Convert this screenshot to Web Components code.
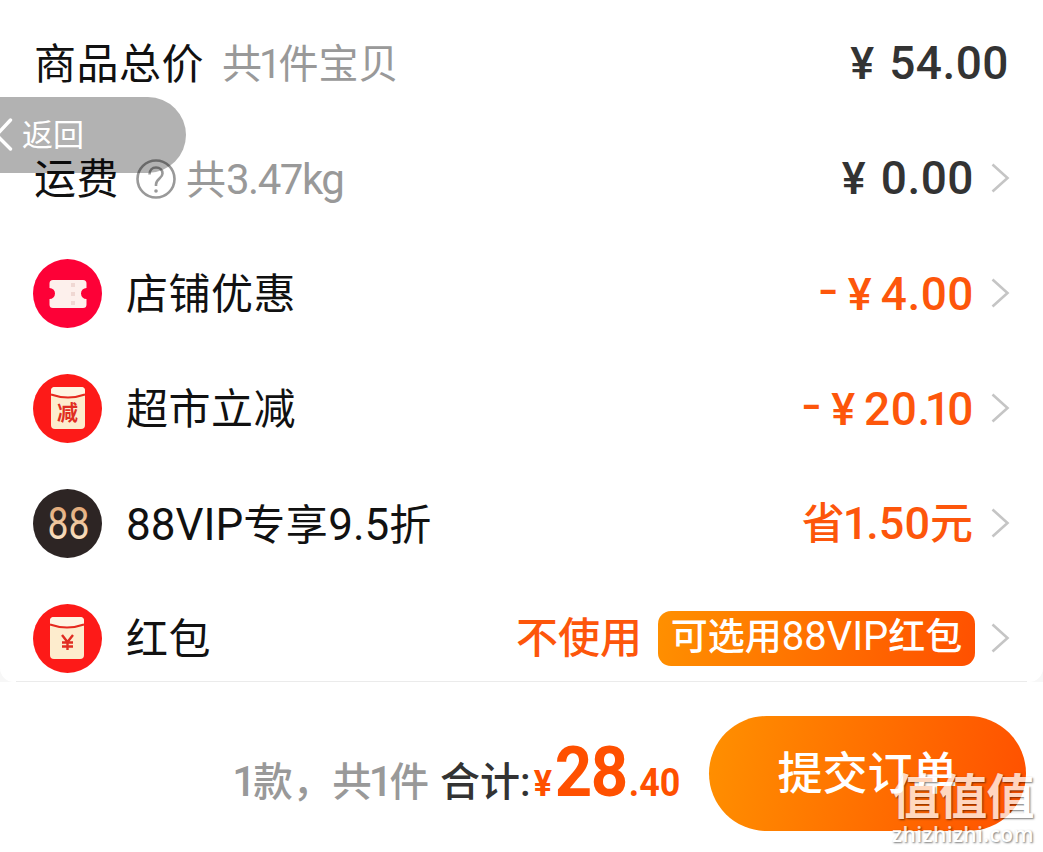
<!DOCTYPE html>
<html lang="zh-CN">
<head>
<meta charset="utf-8">
<title>确认订单</title>
<style>
  body {
    margin: 0;
    width: 1043px;
    height: 852px;
    overflow: hidden;
    background: #fff;
    font-family: Roboto, "Noto Sans CJK SC", sans-serif;
  }
</style>
</head>
<body>
<order-page></order-page>

<script>
const ICONS = {
  coupon: `
    <circle cx="34.5" cy="34.5" r="34.5" fill="#fd0137"/>
    <path d="M20 21h30a3.500 3.500 0 0 1 3.500 3.500v4.500a5.500 5.500 0 0 0 0 11v5.500a3.500 3.500 0 0 1-3.500 3.500h-30a3.500 3.500 0 0 1-3.500-3.500v-5.500a5.500 5.500 0 0 0 0-11v-4.500a3.500 3.500 0 0 1 3.500-3.500z" fill="#fdf0ec"/>
    <path d="M40 24v4M40 33v4M40 42v4" stroke="#f0d8d3" stroke-width="4"/>`,
  minus: `
    <circle cx="34.5" cy="34.5" r="34.5" fill="#fd1a18"/>
    <rect x="18" y="13" width="34" height="42" rx="4" fill="#fdeccd"/>
    <path d="M18 20v-3a4 4 0 0 1 4-4h26a4 4 0 0 1 4 4v3q-17 6-34 0z" fill="#fff4e2"/>
    <path d="M18 20.500q17 6 34 0" fill="none" stroke="#e5291f" stroke-width="2"/>
    <text x="34.500" y="46" font-size="21" font-weight="700" text-anchor="middle" fill="#e02d22">减</text>`,
  vip: `
    <defs><linearGradient id="gold" x1="0" y1="0" x2="0" y2="1"><stop offset="0.200" stop-color="#e3ac7c"/><stop offset="0.800" stop-color="#fbe3c4"/></linearGradient></defs>
    <circle cx="34.5" cy="34.5" r="34.5" fill="#2d2524"/>
    <text x="14.500" y="50" font-size="44" textLength="42" lengthAdjust="spacingAndGlyphs" fill="url(#gold)">88</text>`,
  packet: `
    <circle cx="34.5" cy="34.5" r="34.5" fill="#fd1a18"/>
    <rect x="17" y="13" width="34" height="42" rx="4" fill="#fdeccd"/>
    <path d="M17 20v-3a4 4 0 0 1 4-4h26a4 4 0 0 1 4 4v3q-17 6-34 0z" fill="#fff4e2"/>
    <path d="M17 20.500q17 6 34 0" fill="none" stroke="#e5291f" stroke-width="2"/>
    <path d="M29 31l5.500 7 5.500-7M34.500 38v8M29 38.500h11M29 42.500h11" fill="none" stroke="#e02d22" stroke-width="2.400"/>`
};

class RoundIcon extends HTMLElement {
  constructor() {
    super();
    this.attachShadow({ mode: "open" });
  }

  connectedCallback() {
    this.shadowRoot.innerHTML = `
      <style>
        :host { display: block; flex: none; width: 69px; height: 69px; letter-spacing: 0; }
        svg { display: block; }
      </style>
      <svg width="69" height="69" viewBox="0 0 69 69">${ICONS[this.getAttribute("name")]}</svg>
    `;
  }
}
customElements.define("round-icon", RoundIcon);

class MoneyText extends HTMLElement {
  constructor() {
    super();
    this.attachShadow({ mode: "open" });
  }

  connectedCallback() {
    const minus = this.hasAttribute("minus");
    this.shadowRoot.innerHTML = `
      <style>
        :host { display: flex; align-items: baseline; font-size: 46px; }
        .sign { margin-right: 8px; font-family: Inter, sans-serif; transform: translateY(-4px); }
        .yen { width: 26px; margin-right: ${minus ? 8 : 14}px; font-size: 45px; text-align: center; }
        .amount { margin-right: -1px; letter-spacing: 0.5px; }
      </style>
      ${minus ? `<span class="sign">-</span>` : ""}
      <span class="yen">¥</span>
      <span class="amount"><slot></slot></span>
    `;
  }
}
customElements.define("money-text", MoneyText);

class FeeRow extends HTMLElement {
  constructor() {
    super();
    this.attachShadow({ mode: "open" });
  }

  connectedCallback() {
    const icon = this.getAttribute("icon");
    this.shadowRoot.innerHTML = `
      <style>
        :host {
          display: flex;
          align-items: center;
          height: 115px;
          padding: 0 33px;
          line-height: 60px;
          white-space: nowrap;
        }
        .label {
          display: flex;
          align-items: center;
          flex: 1;
          padding: 3px 0 0 1px;
          color: #111;
          font-size: 42px;
          letter-spacing: 0.5px;
        }
        round-icon { margin-right: 23px; }
        .value {
          display: flex;
          align-items: center;
          color: #333;
          font-weight: 500;
        }
        :host([accent]) .value { color: #fd560b; }
        .arrow { flex: none; margin: 0 0 1px 18px; }
      </style>
      ${icon ? `<round-icon name="${icon}"></round-icon>` : ""}
      <div class="label"><slot></slot></div>
      <div class="value"><slot name="value"></slot></div>
      ${this.hasAttribute("link") ? `
      <svg class="arrow" width="19" height="32" viewBox="0 0 19 32">
        <path d="M1.500 2.500l15 13.500-15 13.500" fill="none" stroke="#c5c5c5" stroke-width="2.600"/>
      </svg>` : ""}
    `;
  }
}
customElements.define("fee-row", FeeRow);

class HelpIcon extends HTMLElement {
  constructor() {
    super();
    this.attachShadow({ mode: "open" });
  }

  connectedCallback() {
    this.shadowRoot.innerHTML = `
      <style>
        :host { display: block; flex: none; width: 40px; height: 40px; }
        svg { display: block; }
      </style>
      <svg width="40" height="40" viewBox="0 0 40 40" fill="none" stroke="#999" stroke-width="2.600">
        <circle cx="20" cy="20" r="18.500"/>
        <path d="M13.500 15.500c0-4.500 2.700-7 6.500-7s6.500 2.500 6.500 6c0 5-6.500 5-6.500 11v1.500"/>
        <circle cx="20" cy="32" r="1.800" fill="#999" stroke="none"/>
      </svg>
    `;
  }
}
customElements.define("help-icon", HelpIcon);

class GradientTag extends HTMLElement {
  constructor() {
    super();
    this.attachShadow({ mode: "open" });
  }

  connectedCallback() {
    this.shadowRoot.innerHTML = `
      <style>
        :host {
          display: block;
          box-sizing: border-box;
          width: 317px;
          height: 55px;
          border-radius: 13px;
          background: linear-gradient(100deg, #ff9000, #ff5000);
          color: #fff;
          font-size: 37px;
          line-height: 52px;
          text-align: center;
        }
      </style>
      <slot></slot>
    `;
  }
}
customElements.define("gradient-tag", GradientTag);

class BackPill extends HTMLElement {
  constructor() {
    super();
    this.attachShadow({ mode: "open" });
  }

  connectedCallback() {
    this.shadowRoot.innerHTML = `
      <style>
        :host {
          position: absolute;
          left: 0;
          top: 97px;
          display: flex;
          align-items: center;
          width: 186px;
          height: 76px;
          border-radius: 0 38px 38px 0;
          background: rgba(0, 0, 0, 0.3);
        }
        svg { flex: none; }
        span { margin-left: 8px; padding-top: 2px; color: #fff; font-size: 31px; line-height: 74px; }
      </style>
      <svg width="14" height="36" viewBox="0 0 14 36">
        <path d="M10.500 3l-14 15 14 14" fill="none" stroke="#fff" stroke-width="3.400" stroke-linecap="round"/>
      </svg>
      <span><slot></slot></span>
    `;
  }
}
customElements.define("back-pill", BackPill);

class SubmitBar extends HTMLElement {
  constructor() {
    super();
    this.attachShadow({ mode: "open" });
  }

  connectedCallback() {
    this.shadowRoot.innerHTML = `
      <style>
        :host {
          display: flex;
          justify-content: flex-end;
          align-items: flex-start;
          box-sizing: border-box;
          height: 170px;
          padding: 34px 17px 0 0;
          background: #fff;
          white-space: nowrap;
        }
        .total {
          display: flex;
          align-items: baseline;
          height: 115px;
          margin-right: 29px;
          line-height: 112px;
          font-weight: 500;
        }
        .count { color: #999; font-size: 39.500px; }
        .one { margin: 0 -3px; font-size: 42px; }
        .text { margin-left: 11px; color: #333; font-size: 40px; }
        .money {
          display: flex;
          align-items: baseline;
          margin-left: -10px;
          color: #ff5000;
          font-weight: 700;
          transform: scaleX(0.92);
          transform-origin: right;
        }
        .small { font-size: 39px; }
        .yen { font-size: 37px; }
        .big { margin: 0 2px 0 3px; font-size: 71px; letter-spacing: -1.500px; }
        button {
          width: 317px;
          height: 115px;
          padding: 2px 0 0;
          border: 0;
          border-radius: 58px;
          background: linear-gradient(100deg, #ff9000, #ff5000);
          color: #fff;
          font: 500 45px/113px Roboto, "Noto Sans CJK SC", sans-serif;
        }
      </style>
      <div class="total">
        <span class="count"><span class="one">1</span>款，共<span class="one">1</span>件</span>
        <span class="text">合计:</span>
        <span class="money"><span class="yen">¥</span><span class="big">28</span><span class="small">.40</span></span>
      </div>
      <button type="button">提交订单</button>
    `;
  }
}
customElements.define("submit-bar", SubmitBar);

class SiteMark extends HTMLElement {
  constructor() {
    super();
    this.attachShadow({ mode: "open" });
  }

  connectedCallback() {
    this.shadowRoot.innerHTML = `
      <style>
        :host {
          position: absolute;
          left: 892px;
          top: 771px;
          width: 146px;
          color: #fff;
          opacity: 0.75;
          text-shadow: 1px 1px 2px rgba(0, 0, 0, 0.7);
          white-space: nowrap;
        }
        .name { font-size: 48px; font-weight: 700; line-height: 54px; letter-spacing: -0.700px; }
        .site { margin-top: -3px; font: 600 21px/24px "Open Sans", sans-serif; letter-spacing: 0.400px; }
      </style>
      <div class="name">值值值</div>
      <div class="site">zhizhizhi.com</div>
    `;
  }
}
customElements.define("site-mark", SiteMark);

class OrderPage extends HTMLElement {
  constructor() {
    super();
    this.attachShadow({ mode: "open" });
  }

  connectedCallback() {
    this.shadowRoot.innerHTML = `
      <style>
        :host { display: block; position: relative; width: 1043px; height: 852px; }
        .card { height: 682px; background: #f7f7f7; }
        .rows {
          box-sizing: border-box;
          height: 682px;
          padding-top: 6px;
          border-radius: 0 0 14px 14px;
          background: #fff;
        }
        .line { height: 1px; margin: -15px 16px 0; background: #ebebeb; }
        .gray { color: #999; font-size: 41px; letter-spacing: 0; }
        .count { margin-left: 18px; font-size: 40px; }
        .count .one { margin: 0 -3px; }
        .total { margin-right: 2px; }
        .num { font-size: 44px; letter-spacing: 0; }
        help-icon { margin: 0 0 3px 17px; }
        .weight { margin-left: 10px; font-size: 40px; }
        .weight .num { font-size: 42px; letter-spacing: -1.500px; }
        .none { margin-right: 16px; font-size: 42px; }
        .save { font-size: 43px; }
        .save .num { font-size: 45px; }
        .save .one { margin: 0 -2px; }
        money-text .one { margin: 0 -4px 0 -6px; }
        gradient-tag { margin-right: -2px; }
        gradient-tag .num { font-size: 40px; font-weight: 400; }
      </style>
      <div class="card">
        <div class="rows">
          <fee-row>商品总价<span class="gray count">共<span class="one">1</span>件宝贝</span><money-text slot="value" class="total">54.00</money-text></fee-row>
          <fee-row link>运费<help-icon></help-icon><span class="gray weight">共<span class="num">3.47kg</span></span><money-text slot="value">0.00</money-text></fee-row>
          <fee-row link accent icon="coupon">店铺优惠<money-text slot="value" minus>4.00</money-text></fee-row>
          <fee-row link accent icon="minus">超市立减<money-text slot="value" minus>20.<span class="one">1</span>0</money-text></fee-row>
          <fee-row link accent icon="vip"><span><span class="num">88VIP</span>专享<span class="num">9.5</span>折</span><span slot="value" class="save">省<span class="num"><span class="one">1</span>.50</span>元</span></fee-row>
          <fee-row link accent icon="packet">红包<span slot="value" class="none">不使用</span><gradient-tag slot="value">可选用<span class="num">88VIP</span>红包</gradient-tag></fee-row>
          <div class="line"></div>
        </div>
      </div>
      <submit-bar></submit-bar>
      <back-pill>返回</back-pill>
      <site-mark></site-mark>
    `;
  }
}
customElements.define("order-page", OrderPage);
</script>
</body>
</html>
